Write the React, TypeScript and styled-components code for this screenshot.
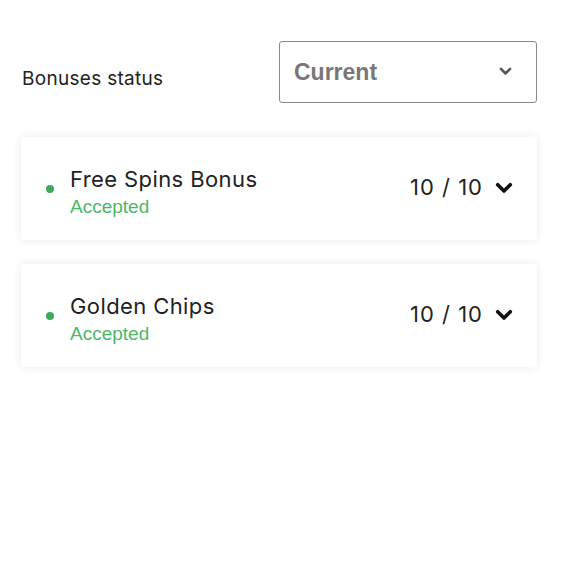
import React from "react";
import styled, { createGlobalStyle } from "styled-components";

const Global = createGlobalStyle`
  html, body { margin: 0; padding: 0; background: #ffffff; }
  body { font-family: Inter, "Liberation Sans", Arial, sans-serif; color: #222; }
`;

const Page = styled.div`
  padding: 41px 25px 40px 21px;
  border-top: 2px solid #f6f6f6;
  margin-top: -2px;
`;

const Header = styled.div`
  display: flex;
  justify-content: space-between;
  align-items: flex-start;
`;

const Label = styled.span`
  font-family: Inter, "Liberation Sans", Arial, sans-serif;
  font-size: 19px;
  letter-spacing: 0.3px;
  line-height: 22px;
  color: #222;
  padding: 27px 0 0 1px;
`;

const Select = styled.div`
  box-sizing: border-box;
  width: 258px;
  height: 62px;
  border: 1px solid #8a8a8a;
  border-radius: 3px;
  display: flex;
  align-items: center;
  justify-content: space-between;
  padding: 0 24px 0 14px;
`;

const SelectValue = styled.span`
  font-family: "Liberation Sans", Arial, sans-serif;
  font-weight: 700;
  font-size: 23px;
  color: #777;
`;

const List = styled.div`
  margin-top: 34px;
  display: flex;
  flex-direction: column;
  gap: 24px;
`;

const Card = styled.div`
  box-sizing: border-box;
  height: 103px;
  background: #fff;
  border-radius: 3px;
  box-shadow: 0 0 10px rgba(0, 0, 0, 0.09);
  display: flex;
  align-items: center;
  padding: 0 24px 0 25px;
`;

const Dot = styled.span<{ $color: string }>`
  width: 8px;
  height: 8px;
  border-radius: 50%;
  background: ${(p) => p.$color};
  flex: none;
  margin: 0 16px 0 0;
`;

const Info = styled.div`
  display: flex;
  flex-direction: column;
  flex: 1;
  padding-top: 6px;
`;

const Title = styled.span`
  font-family: Inter, "Liberation Sans", Arial, sans-serif;
  font-size: 22px;
  letter-spacing: 0.4px;
  line-height: 26px;
  color: #222;
`;

const Status = styled.span`
  font-family: "Liberation Sans", Arial, sans-serif;
  font-size: 19px;
  line-height: 22px;
  color: #4cb865;
  margin-top: 4px;
`;

const Count = styled.span`
  font-family: Inter, "Liberation Sans", Arial, sans-serif;
  font-size: 22px;
  letter-spacing: 1px;
  color: #222;
  margin: 0 12px 3px 0;
`;

const Chevron = ({ size, stroke, width }: { size: number; stroke: string; width: number }) => (
  <svg width={size} height={size * 0.7} viewBox="0 0 20 14" fill="none">
    <polyline
      points="3,3 10,10 17,3"
      stroke={stroke}
      strokeWidth={width}
      strokeLinecap="round"
      strokeLinejoin="round"
    />
  </svg>
);

const bonuses = [
  { name: "Free Spins Bonus", status: "Accepted", count: "10 / 10" },
  { name: "Golden Chips", status: "Accepted", count: "10 / 10" },
];

export default function App() {
  return (
    <>
      <Global />
      <Page>
        <Header>
          <Label>Bonuses status</Label>
          <Select>
            <SelectValue>Current</SelectValue>
            <Chevron size={13} stroke="#555" width={4} />
          </Select>
        </Header>
        <List>
          {bonuses.map((b) => (
            <Card key={b.name}>
              <Dot $color="#3daa5c" />
              <Info>
                <Title>{b.name}</Title>
                <Status>{b.status}</Status>
              </Info>
              <Count>{b.count}</Count>
              <Chevron size={18} stroke="#111" width={4} />
            </Card>
          ))}
        </List>
      </Page>
    </>
  );
}
